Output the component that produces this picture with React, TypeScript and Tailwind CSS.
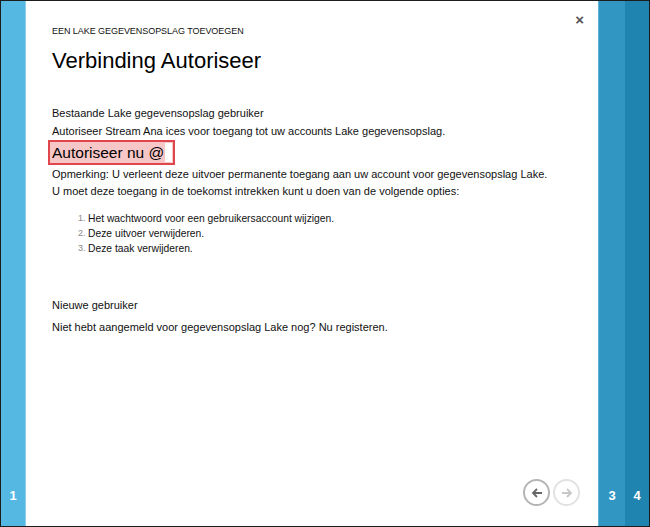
import React from "react";

export default function App() {
  const font = { fontFamily: '"Liberation Sans", Arial, sans-serif' };
  return (
    <div
      className="w-[650px] h-[527px] border border-[#1c1c1c] flex bg-white overflow-hidden"
      style={font}
    >
      <div className="w-[24px] bg-[#55b8e2] flex flex-col justify-end items-center pb-[24px]">
        <span className="text-white font-bold text-[13px] leading-none">1</span>
      </div>
      <div className="w-[1px] bg-[#8fd0ee]" />
      <div className="flex-1 flex flex-col relative bg-white">
        <button className="absolute right-[14px] top-[11px] text-[#555] text-[15px] font-bold leading-none">
          ×
        </button>
        <div className="pl-[26px] pt-[25px] text-[#111]">
          <div className="text-[9px] leading-[11px] tracking-[-0.05px]">EEN LAKE GEGEVENSOPSLAG TOEVOEGEN</div>
          <h1 className="text-[22px] leading-[26px] mt-[11px] text-black">Verbinding Autoriseer</h1>
          <div className="mt-[32px] text-[11px] leading-[14px]">Bestaande Lake gegevensopslag gebruiker</div>
          <div className="mt-[4px] text-[11px] leading-[14px]">
            Autoriseer Stream Ana ices voor toegang tot uw accounts Lake gegevensopslag.
          </div>
          <div className="mt-[2px] -ml-[4px] inline-flex">
            <div className="border-2 border-[#e0474c] bg-[#f7c6c6] flex items-center h-[25px] pl-[2px]">
              <span className="text-[15.5px] leading-[20px] text-black">Autoriseer nu @</span>
              <span className="w-[7px] h-[19px] bg-white ml-[1px] mr-[1px]" />
            </div>
          </div>
          <div className="mt-[1px] text-[11px] leading-[17px]">
            Opmerking: U verleent deze uitvoer permanente toegang aan uw account voor gegevensopslag Lake.
          </div>
          <div className="text-[11px] leading-[17px]">
            U moet deze toegang in de toekomst intrekken kunt u doen van de volgende opties:
          </div>
          <ol className="mt-[11px] pl-[26px] text-[10.3px] leading-[15px]">
            <li className="flex">
              <span className="w-[10px] text-[#888] text-[9px]">1.</span>
              <span>Het wachtwoord voor een gebruikersaccount wijzigen.</span>
            </li>
            <li className="flex">
              <span className="w-[10px] text-[#888] text-[9px]">2.</span>
              <span>Deze uitvoer verwijderen.</span>
            </li>
            <li className="flex">
              <span className="w-[10px] text-[#888] text-[9px]">3.</span>
              <span>Deze taak verwijderen.</span>
            </li>
          </ol>
          <div className="mt-[42px] text-[11px] leading-[14px]">Nieuwe gebruiker</div>
          <div className="mt-[8px] text-[11px] leading-[14px]">
            Niet hebt aangemeld voor gegevensopslag Lake nog? Nu registeren.
          </div>
        </div>
        <div className="mt-auto flex justify-end gap-[3px] pr-[18px] pb-[20px]">
          <div className="w-[27px] h-[27px] rounded-full border-2 border-[#b5b5b5] flex items-center justify-center">
            <svg width="12" height="12" viewBox="0 0 12 12" fill="none" stroke="#666" strokeWidth="1.8">
              <path d="M11 6H2M6 2L2 6l4 4" />
            </svg>
          </div>
          <div className="w-[27px] h-[27px] rounded-full border-2 border-[#e2e2e2] flex items-center justify-center">
            <svg width="12" height="12" viewBox="0 0 12 12" fill="none" stroke="#c8c8c8" strokeWidth="1.8">
              <path d="M1 6h9M6 2l4 4-4 4" />
            </svg>
          </div>
        </div>
      </div>
      <div className="w-[1px] bg-[#5fb3d8]" />
      <div className="w-[26px] bg-[#3296c2] flex flex-col justify-end items-center pb-[24px]">
        <span className="text-white font-bold text-[13px] leading-none">3</span>
      </div>
      <div className="w-[24px] bg-[#1f84b0] flex flex-col justify-end items-center pb-[24px]">
        <span className="text-white font-bold text-[13px] leading-none">4</span>
      </div>
    </div>
  );
}
